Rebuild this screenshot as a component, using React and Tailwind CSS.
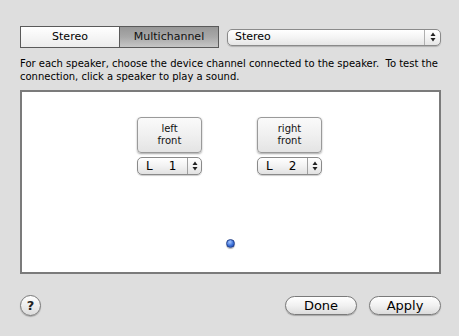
import React from "react";

function Stepper({ ch, num }) {
  return (
    <div className="mt-[4px] flex h-[18px] w-[65px] items-stretch overflow-hidden rounded-[5px] border border-[#8a8a8a] bg-gradient-to-b from-[#ffffff] via-[#f2f2f2] to-[#e2e2e2] text-[12px] text-black shadow-[0_1px_1px_rgba(0,0,0,0.2)]">
      <div className="flex flex-1 items-center pl-[8px]">
        <span>{ch}</span>
        <span className="ml-[16px]">{num}</span>
      </div>
      <div className="flex w-[14px] flex-col items-center justify-center border-l border-[#a0a0a0] leading-none">
        <svg width="6" height="10" viewBox="0 0 6 10">
          <path d="M3 0.5 L5.5 4 L0.5 4 Z" fill="#222" />
          <path d="M3 9.5 L5.5 6 L0.5 6 Z" fill="#222" />
        </svg>
      </div>
    </div>
  );
}

function Speaker({ label1, label2, ch, num, className }) {
  return (
    <div className={"absolute flex flex-col " + className}>
      <div className="flex h-[36px] w-[65px] flex-col items-center justify-center rounded-[4px] border border-[#9a9a9a] bg-gradient-to-b from-[#fafafa] via-[#f0f0f0] to-[#e4e4e4] text-[10px] leading-[12px] text-[#111] shadow-[0_1px_2px_rgba(0,0,0,0.35)]">
        <span>{label1}</span>
        <span>{label2}</span>
      </div>
      <Stepper ch={ch} num={num} />
    </div>
  );
}

function PillButton({ children, className }) {
  return (
    <div
      className={
        "flex h-[19px] w-[72px] items-center justify-center rounded-full border border-[#7a7a7a] bg-gradient-to-b from-[#ffffff] via-[#f1f1f1] to-[#dcdcdc] text-[13px] text-black shadow-[0_1px_1px_rgba(0,0,0,0.25)] " +
        (className || "")
      }
    >
      {children}
    </div>
  );
}

export default function App() {
  return (
    <div
      className="flex h-[336px] w-[459px] flex-col bg-[#dedede] pl-[20px] pr-[18px] pt-[26px]"
      style={{ fontFamily: '"DejaVu Sans", "Liberation Sans", sans-serif' }}
    >
      <div className="flex items-center">
        <div className="flex h-[22px] w-[199px] overflow-hidden border border-[#5a5a5a] text-[11px] text-black">
          <div className="flex w-[98px] items-center justify-center bg-gradient-to-b from-[#ffffff] to-[#ececec]">
            Stereo
          </div>
          <div className="flex flex-1 items-center justify-center border-l border-[#5a5a5a] bg-gradient-to-b from-[#979797] via-[#a8a8a8] to-[#c6c6c6] text-[#111]">
            Multichannel
          </div>
        </div>
        <div className="ml-[8px] flex h-[17px] w-[214px] items-stretch rounded-[5px] border border-[#8a8a8a] bg-gradient-to-b from-[#ffffff] via-[#f4f4f4] to-[#e6e6e6] text-[11px] text-black shadow-[0_1px_1px_rgba(0,0,0,0.2)]">
          <div className="flex flex-1 items-center pl-[7px]">Stereo</div>
          <div className="flex w-[16px] items-center justify-center border-l border-[#b0b0b0]">
            <svg width="6" height="10" viewBox="0 0 6 10">
              <path d="M3 0.5 L5.5 4 L0.5 4 Z" fill="#222" />
              <path d="M3 9.5 L5.5 6 L0.5 6 Z" fill="#222" />
            </svg>
          </div>
        </div>
      </div>

      <p className="mt-[9px] whitespace-nowrap text-[10px] leading-[13px] text-black">
        For each speaker, choose the device channel connected to the speaker.&nbsp; To test the
        <br />
        connection, click a speaker to play a sound.
      </p>

      <div className="relative mt-[7px] h-[184px] w-[421px] border-2 border-[#7b7b7b] bg-white">
        <Speaker label1="left" label2="front" ch="L" num="1" className="left-[115px] top-[25px]" />
        <Speaker label1="right" label2="front" ch="L" num="2" className="left-[235px] top-[25px]" />
        <div className="absolute left-[204px] top-[147px] h-[9px] w-[9px] rounded-full border border-[#23408a] bg-[radial-gradient(circle_at_40%_30%,#a8c8ff,#3a6fd8_55%,#1d3f99)] shadow-[0_1px_1px_rgba(0,0,0,0.3)]" />
      </div>

      <div className="mt-[21px] flex items-center">
        <div className="flex h-[21px] w-[21px] items-center justify-center rounded-full border border-[#7a7a7a] bg-gradient-to-b from-[#ffffff] to-[#dcdcdc] text-[13px] font-bold text-[#222] shadow-[0_1px_1px_rgba(0,0,0,0.25)]">
          ?
        </div>
        <div className="flex-1" />
        <PillButton>Done</PillButton>
        <PillButton className="ml-[12px]">Apply</PillButton>
      </div>
    </div>
  );
}
